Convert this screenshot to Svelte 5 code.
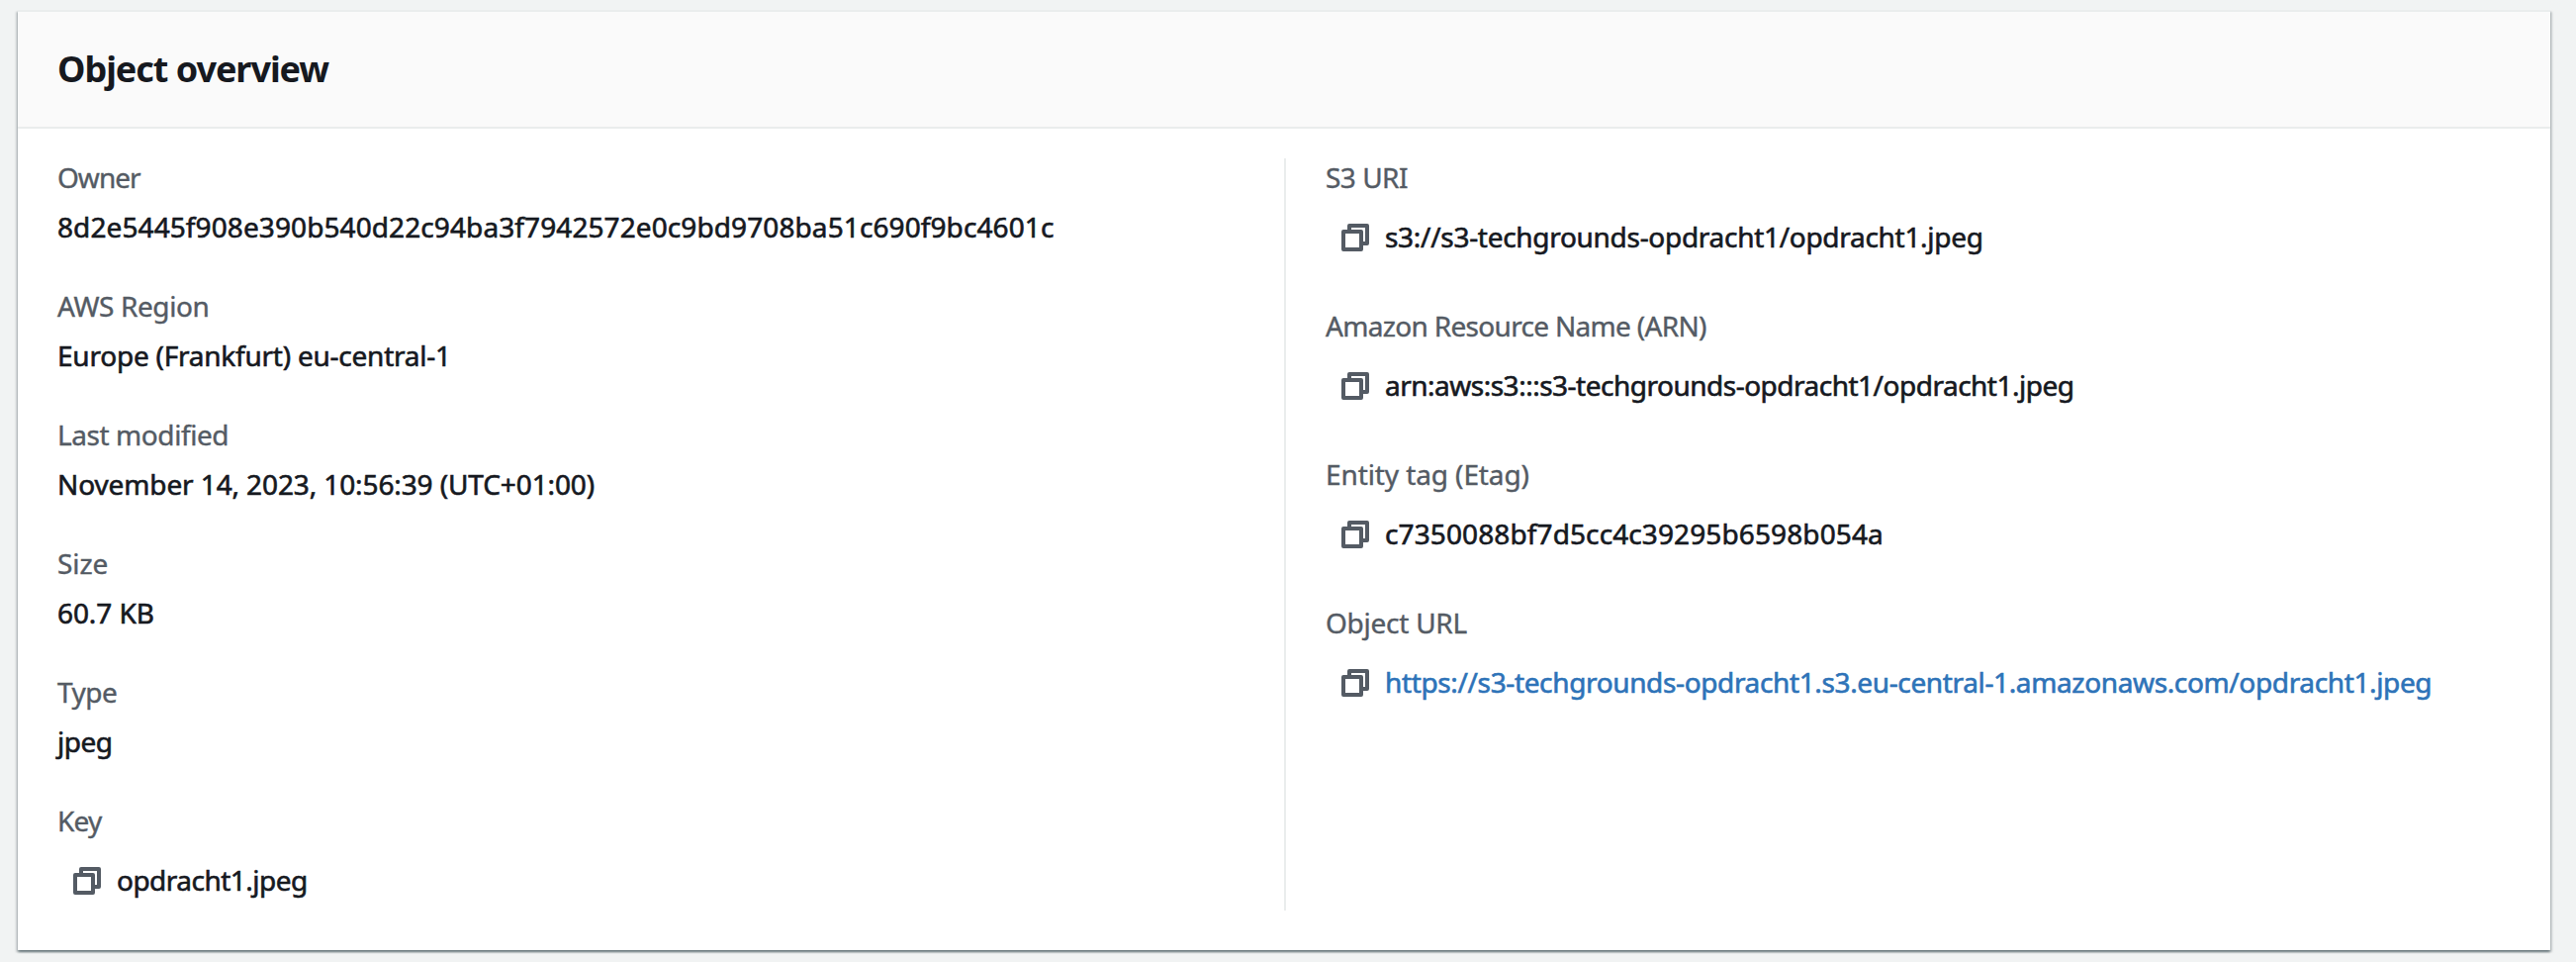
<script>
  const left = [
    { label: 'Owner', lt: -1.0, value: '8d2e5445f908e390b540d22c94ba3f7942572e0c9bd9708ba51c690f9bc4601c', vt: 0.095 },
    { label: 'AWS Region', lt: -0.395, value: 'Europe (Frankfurt) eu-central-1', vt: -0.23 },
    { label: 'Last modified', lt: -0.42, value: 'November 14, 2023, 10:56:39 (UTC+01:00)', vt: -0.11 },
    { label: 'Size', lt: -0.085, value: '60.7 KB', vt: -0.08 },
    { label: 'Type', lt: -0.503, value: 'jpeg', vt: -0.5 },
    { label: 'Key', lt: -0.782, value: 'opdracht1.jpeg', vt: -0.52, copy: true }
  ];
  const right = [
    { label: 'S3 URI', lt: -0.51, value: 's3://s3-techgrounds-opdracht1/opdracht1.jpeg', vt: -0.295, copy: true },
    { label: 'Amazon Resource Name (ARN)', lt: -0.683, value: 'arn:aws:s3:::s3-techgrounds-opdracht1/opdracht1.jpeg', vt: -0.5, copy: true },
    { label: 'Entity tag (Etag)', lt: -0.1, value: 'c7350088bf7d5cc4c39295b6598b054a', vt: 0.11, copy: true },
    { label: 'Object URL', lt: -0.257, value: 'https://s3-techgrounds-opdracht1.s3.eu-central-1.amazonaws.com/opdracht1.jpeg', vt: -0.363, copy: true, link: true }
  ];
</script>

{#snippet field(f)}
  <div class="field">
    <div class="label" style="letter-spacing:{f.lt}px">{f.label}</div>
    <div class="value" class:copyable={f.copy}>
      {#if f.copy}
        <button class="copy" aria-label="Copy">
          <svg viewBox="0 0 28 28" width="28" height="28" fill="none" stroke="currentColor" stroke-width="4" stroke-linejoin="round">
            <path d="M2 8H20V26H2Z" />
            <path d="M8 8V2H26V20H20" />
          </svg>
        </button>
      {/if}
      {#if f.link}
        <a href="#object" style="letter-spacing:{f.vt}px">{f.value}</a>
      {:else}
        <span style="letter-spacing:{f.vt}px">{f.value}</span>
      {/if}
    </div>
  </div>
{/snippet}

<main>
  <section class="card">
    <header><h2>Object overview</h2></header>
    <div class="columns">
      <div class="column">{#each left as f}{@render field(f)}{/each}</div>
      <div class="column second">{#each right as f}{@render field(f)}{/each}</div>
    </div>
  </section>
</main>

<style>
  :global(body) { background: #f1f3f3; }
  main {
    box-sizing: border-box;
    height: 972px;
    padding: 10px 26px 12px 18px;
    font-family: "Noto Sans", "Open Sans", sans-serif;
    font-size: 28px;
    line-height: 38px;
    color: #16191f;
    overflow: hidden;
  }
  .card {
    box-sizing: border-box;
    height: 950px;
    background: #fff;
    border-top: 2px solid #eaeded;
    box-shadow: 0 2px 2px 0 rgba(0, 28, 36, 0.4), 2px 2px 2px 0 rgba(0, 28, 36, 0.15), -2px 2px 2px 0 rgba(0, 28, 36, 0.15);
  }
  header {
    box-sizing: border-box;
    height: 118px;
    padding: 34px 40px 0;
    background: #fafafa;
    border-bottom: 2px solid #eaeded;
  }
  h2 {
    margin: 0;
    font-size: 36px;
    line-height: 48px;
    font-weight: 700;
    letter-spacing: -1.05px;
  }
  .columns {
    display: grid;
    grid-template-columns: 1fr 1fr;
    padding: 30px 0 40px;
  }
  .column {
    padding: 0 40px 12px;
    display: flex;
    flex-direction: column;
    gap: 42px;
  }
  .second {
    border-left: 2px solid #eaeded;
    gap: 52px;
  }
  .label { color: #545b64; -webkit-text-stroke: 0.4px currentColor; }
  .value {
    display: flex;
    align-items: center;
    margin-top: 12px;
    white-space: nowrap;
    -webkit-text-stroke: 0.6px currentColor;
  }
  .copyable {
    margin-top: 22px;
    padding-left: 16px;
    gap: 16px;
  }
  .copy {
    display: flex;
    margin: 2px 0 0;
    padding: 0;
    border: 0;
    background: none;
    color: #545b64;
  }
  a { color: #2e73b8; text-decoration: none; }
</style>
